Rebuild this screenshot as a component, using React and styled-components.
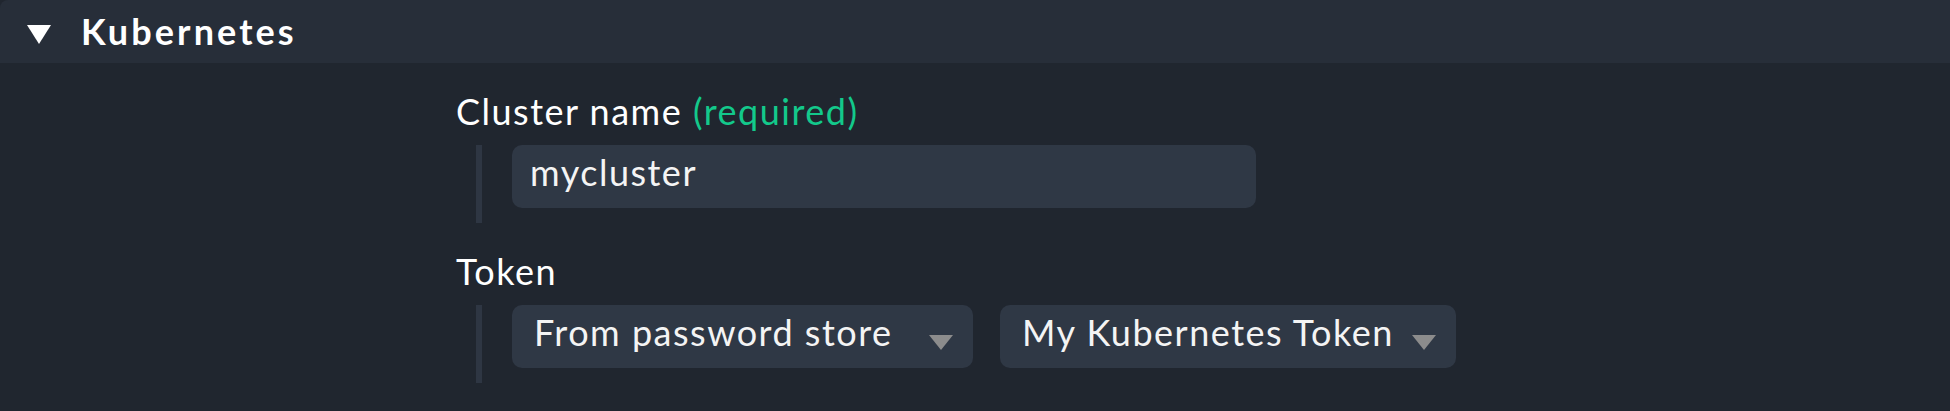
import React from 'react';
import styled, { createGlobalStyle } from 'styled-components';

const GlobalStyle = createGlobalStyle`
  html, body {
    margin: 0;
    padding: 0;
    background: #20262f;
  }
  body {
    font-family: Lato, "Noto Sans", sans-serif;
    color: #ffffff;
  }
`;

const Page = styled.div`
  width: 1950px;
  height: 411px;
  background: #20262f;
  overflow: hidden;
`;

const SectionHeader = styled.div`
  height: 63px;
  display: flex;
  align-items: center;
  background: #272e39;
  border-top-left-radius: 8px;
  padding-left: 27px;
  box-sizing: border-box;
`;

const Caret = styled.span`
  width: 0;
  height: 0;
  border-left: 12px solid transparent;
  border-right: 12px solid transparent;
  border-top: 19px solid #ffffff;
  margin-top: 6px;
`;

const SectionTitle = styled.h2`
  margin: 0 0 0 30px;
  font-size: 36px;
  font-weight: 700;
  letter-spacing: 3.1px;
  line-height: 1.2;
`;

const Body = styled.div`
  padding: 27px 0 0 456px;
  display: flex;
  flex-direction: column;
  gap: 27px;
`;

const Field = styled.div`
  display: flex;
  flex-direction: column;
`;

const Label = styled.div`
  font-size: 36px;
  line-height: 1.2;
  letter-spacing: 1.5px;
  margin-bottom: 12px;
`;

const Required = styled.span`
  color: #13c98b;
`;

const Indent = styled.div`
  margin-left: 20px;
  border-left: 6px solid #2e3643;
  padding: 0 0 15px 30px;
  display: flex;
  gap: 27px;
`;

const TextInput = styled.div`
  width: ${p => p.width}px;
  height: 63px;
  box-sizing: border-box;
  padding: 6px 18px 0;
  background: #2f3845;
  border-radius: 10px;
  font-size: 36px;
  line-height: 1.2;
  letter-spacing: 1.5px;
  color: #f4f4f4;
`;

const Select = styled.div`
  width: ${p => p.width}px;
  height: 63px;
  box-sizing: border-box;
  padding: 6px 20px 0 22px;
  background: #2f3845;
  border-radius: 10px;
  display: flex;
  justify-content: space-between;
  font-size: 36px;
  line-height: 1.2;
  letter-spacing: 1.5px;
  color: #f4f4f4;
`;

const SelectArrow = styled.span`
  width: 0;
  height: 0;
  border-left: 12px solid transparent;
  border-right: 12px solid transparent;
  border-top: 15px solid #8c8c8c;
  margin-top: 24px;
`;

export default function App() {
  return (
    <Page>
      <GlobalStyle />
      <SectionHeader>
        <Caret />
        <SectionTitle>Kubernetes</SectionTitle>
      </SectionHeader>
      <Body>
        <Field>
          <Label>
            Cluster name <Required>(required)</Required>
          </Label>
          <Indent>
            <TextInput width={744}>mycluster</TextInput>
          </Indent>
        </Field>
        <Field>
          <Label>Token</Label>
          <Indent>
            <Select width={461}>
              From password store
              <SelectArrow />
            </Select>
            <Select width={456}>
              My Kubernetes Token
              <SelectArrow />
            </Select>
          </Indent>
        </Field>
      </Body>
    </Page>
  );
}
